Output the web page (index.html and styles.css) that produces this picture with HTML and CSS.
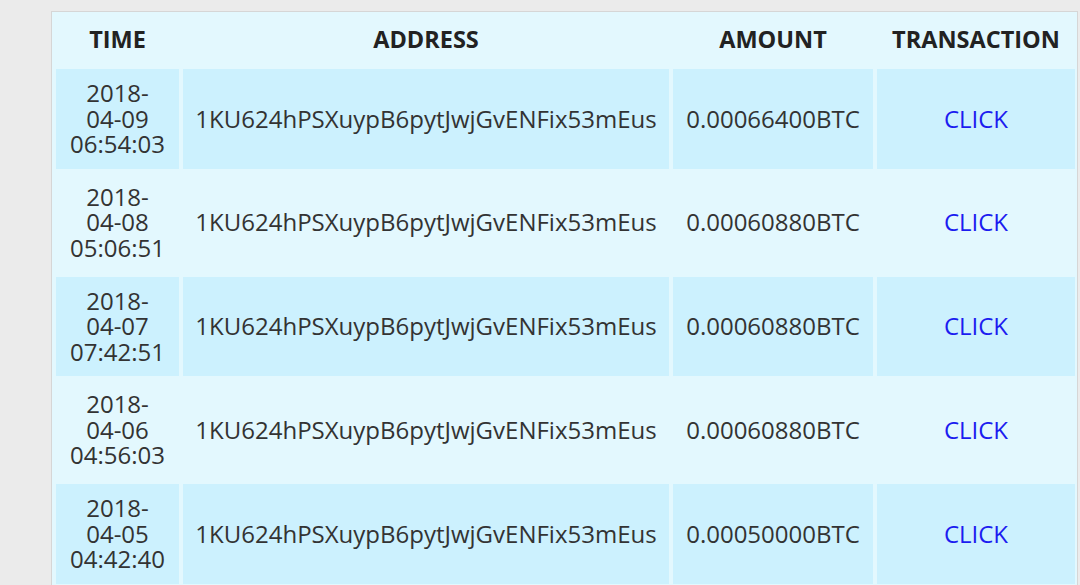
FILE: index.html
```html
<!DOCTYPE html>
<html>
<head>
<meta charset="utf-8">
<link rel="stylesheet" href="styles.css">
</head>
<body>
<div class="panel">
  <table class="tx-table">
    <colgroup>
      <col class="c-time">
      <col class="c-addr">
      <col class="c-amt">
      <col class="c-tx">
    </colgroup>
    <thead>
      <tr class="head-row">
        <th>TIME</th>
        <th>ADDRESS</th>
        <th>AMOUNT</th>
        <th>TRANSACTION</th>
      </tr>
    </thead>
    <tbody>
      <tr class="row odd">
        <td>2018-<br>04-09<br>06:54:03</td>
        <td>1KU624hPSXuypB6pytJwjGvENFix53mEus</td>
        <td>0.00066400BTC</td>
        <td><a class="link" href="#">CLICK</a></td>
      </tr>
      <tr class="row even">
        <td>2018-<br>04-08<br>05:06:51</td>
        <td>1KU624hPSXuypB6pytJwjGvENFix53mEus</td>
        <td>0.00060880BTC</td>
        <td><a class="link" href="#">CLICK</a></td>
      </tr>
      <tr class="row odd">
        <td>2018-<br>04-07<br>07:42:51</td>
        <td>1KU624hPSXuypB6pytJwjGvENFix53mEus</td>
        <td>0.00060880BTC</td>
        <td><a class="link" href="#">CLICK</a></td>
      </tr>
      <tr class="row even">
        <td>2018-<br>04-06<br>04:56:03</td>
        <td>1KU624hPSXuypB6pytJwjGvENFix53mEus</td>
        <td>0.00060880BTC</td>
        <td><a class="link" href="#">CLICK</a></td>
      </tr>
      <tr class="row odd">
        <td>2018-<br>04-05<br>04:42:40</td>
        <td>1KU624hPSXuypB6pytJwjGvENFix53mEus</td>
        <td>0.00050000BTC</td>
        <td><a class="link" href="#">CLICK</a></td>
      </tr>
    </tbody>
  </table>
</div>
</body>
</html>
```
FILE: styles.css
```css
html, body {
  margin: 0;
  padding: 0;
  background: #ebebeb;
  font-family: "Open Sans", "Liberation Sans", sans-serif;
}
.panel {
  margin: 11px 0 0 51px;
  width: 1025px;
  border: 1px solid #d6d6d6;
  background: #e3f8fe;
  overflow: hidden;
}
.tx-table {
  border-collapse: separate;
  border-spacing: 4px;
  table-layout: fixed;
  width: 1027px;
}
.c-time { width: 123px; }
.c-addr { width: 486px; }
.c-amt { width: 200px; }
.c-tx { width: 198px; }
.head-row th {
  height: 46px;
  padding: 0 0 3px;
  font-size: 23.5px;
  font-weight: 700;
  color: #222;
  text-align: center;
  vertical-align: middle;
}
.row td {
  height: 98.75px;
  padding: 0 0 1px;
  font-size: 24px;
  line-height: 25.5px;
  color: #333;
  text-align: center;
  vertical-align: middle;
}
.row.odd td { background: #ccf1fe; }
.link {
  color: #1c1cf0;
  text-decoration: none;
}
```
